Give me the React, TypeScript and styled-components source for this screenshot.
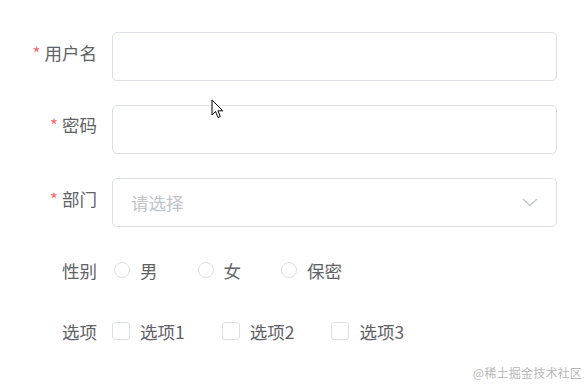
import React from 'react';
import styled, { createGlobalStyle } from 'styled-components';

const GlobalStyle = createGlobalStyle`
  html, body {
    margin: 0;
    padding: 0;
    background: #ffffff;
  }
  body {
    font-family: "Noto Sans CJK SC", "Noto Sans", "Liberation Sans", sans-serif;
    color: #606266;
  }
`;

const Page = styled.div`
  position: relative;
  width: 586px;
  height: 386px;
  overflow: hidden;
  background: #ffffff;
`;

const Form = styled.form`
  display: flex;
  flex-direction: column;
  padding-top: 32px;
`;

const Row = styled.div<{ $height: number; $gap: number }>`
  display: flex;
  align-items: center;
  height: ${(p) => p.$height}px;
  margin-bottom: ${(p) => p.$gap}px;
`;

const Label = styled.label<{ $lift?: number }>`
  width: 112px;
  box-sizing: border-box;
  padding-right: 15px;
  padding-bottom: ${(p) => p.$lift ?? 0}px;
  text-align: right;
  font-size: 17.5px;
  color: #606266;
  white-space: nowrap;
`;

const Star = styled.span`
  color: #f56c6c;
  margin-right: 4px;
  font-size: 17px;
`;

const Field = styled.div`
  position: relative;
  width: 445px;
  height: 49px;
  box-sizing: border-box;
  border: 1px solid #dcdfe6;
  border-radius: 5px;
  background: #fff;
  display: flex;
  align-items: center;
  padding: 0 18px;
`;

const Placeholder = styled.span`
  flex: 1;
  font-size: 17.5px;
  color: #c0c4cc;
`;

const Group = styled.div`
  display: flex;
  align-items: center;
`;

const Option = styled.span<{ $space: number }>`
  display: flex;
  align-items: center;
  margin-right: ${(p) => p.$space}px;
  font-size: 17.5px;
  color: #606266;
`;

const RadioDot = styled.span`
  width: 16px;
  height: 16px;
  margin-left: 2px;
  box-sizing: border-box;
  border: 1px solid #dcdfe6;
  border-radius: 50%;
  margin-right: 10px;
`;

const CheckBox = styled.span`
  width: 18px;
  height: 18px;
  box-sizing: border-box;
  border: 1px solid #dcdfe6;
  border-radius: 3px;
  margin-right: 10px;
`;

const Watermark = styled.div`
  position: absolute;
  right: 4px;
  bottom: 5px;
  font-size: 12px;
  color: #b8b8b8;
  letter-spacing: 0.2px;
`;

const Pointer = styled.svg`
  position: absolute;
  left: 211px;
  top: 99px;
`;

function Chevron() {
  return (
    <svg width="16" height="9" viewBox="0 0 16 9">
      <path d="M1 1 L8 7.5 L15 1" fill="none" stroke="#c0c4cc" strokeWidth="1.3" />
    </svg>
  );
}

function App() {
  const genders = ['男', '女', '保密'];
  const options = ['选项1', '选项2', '选项3'];

  return (
    <Page>
      <GlobalStyle />
      <Form>
        <Row $height={49} $gap={24}>
          <Label $lift={8}><Star>*</Star>用户名</Label>
          <Field />
        </Row>
        <Row $height={49} $gap={24}>
          <Label $lift={10}><Star>*</Star>密码</Label>
          <Field />
        </Row>
        <Row $height={49} $gap={23}>
          <Label $lift={9}><Star>*</Star>部门</Label>
          <Field>
            <Placeholder>请选择</Placeholder>
            <Chevron />
          </Field>
        </Row>
        <Row $height={40} $gap={21}>
          <Label>性别</Label>
          <Group>
            {genders.map((g) => (
              <Option key={g} $space={38}>
                <RadioDot />
                {g}
              </Option>
            ))}
          </Group>
        </Row>
        <Row $height={40} $gap={0}>
          <Label>选项</Label>
          <Group>
            {options.map((o) => (
              <Option key={o} $space={37}>
                <CheckBox />
                {o}
              </Option>
            ))}
          </Group>
        </Row>
      </Form>
      <Pointer width="14" height="21" viewBox="0 0 14 21">
        <path
          d="M1 1 L1 16 L4.5 12.5 L7 18.5 L9.3 17.5 L6.9 11.8 L11.8 11.8 Z"
          fill="#ffffff"
          stroke="#000000"
          strokeWidth="1"
          strokeLinejoin="round"
        />
      </Pointer>
      <Watermark>@稀土掘金技术社区</Watermark>
    </Page>
  );
}

export default App;
